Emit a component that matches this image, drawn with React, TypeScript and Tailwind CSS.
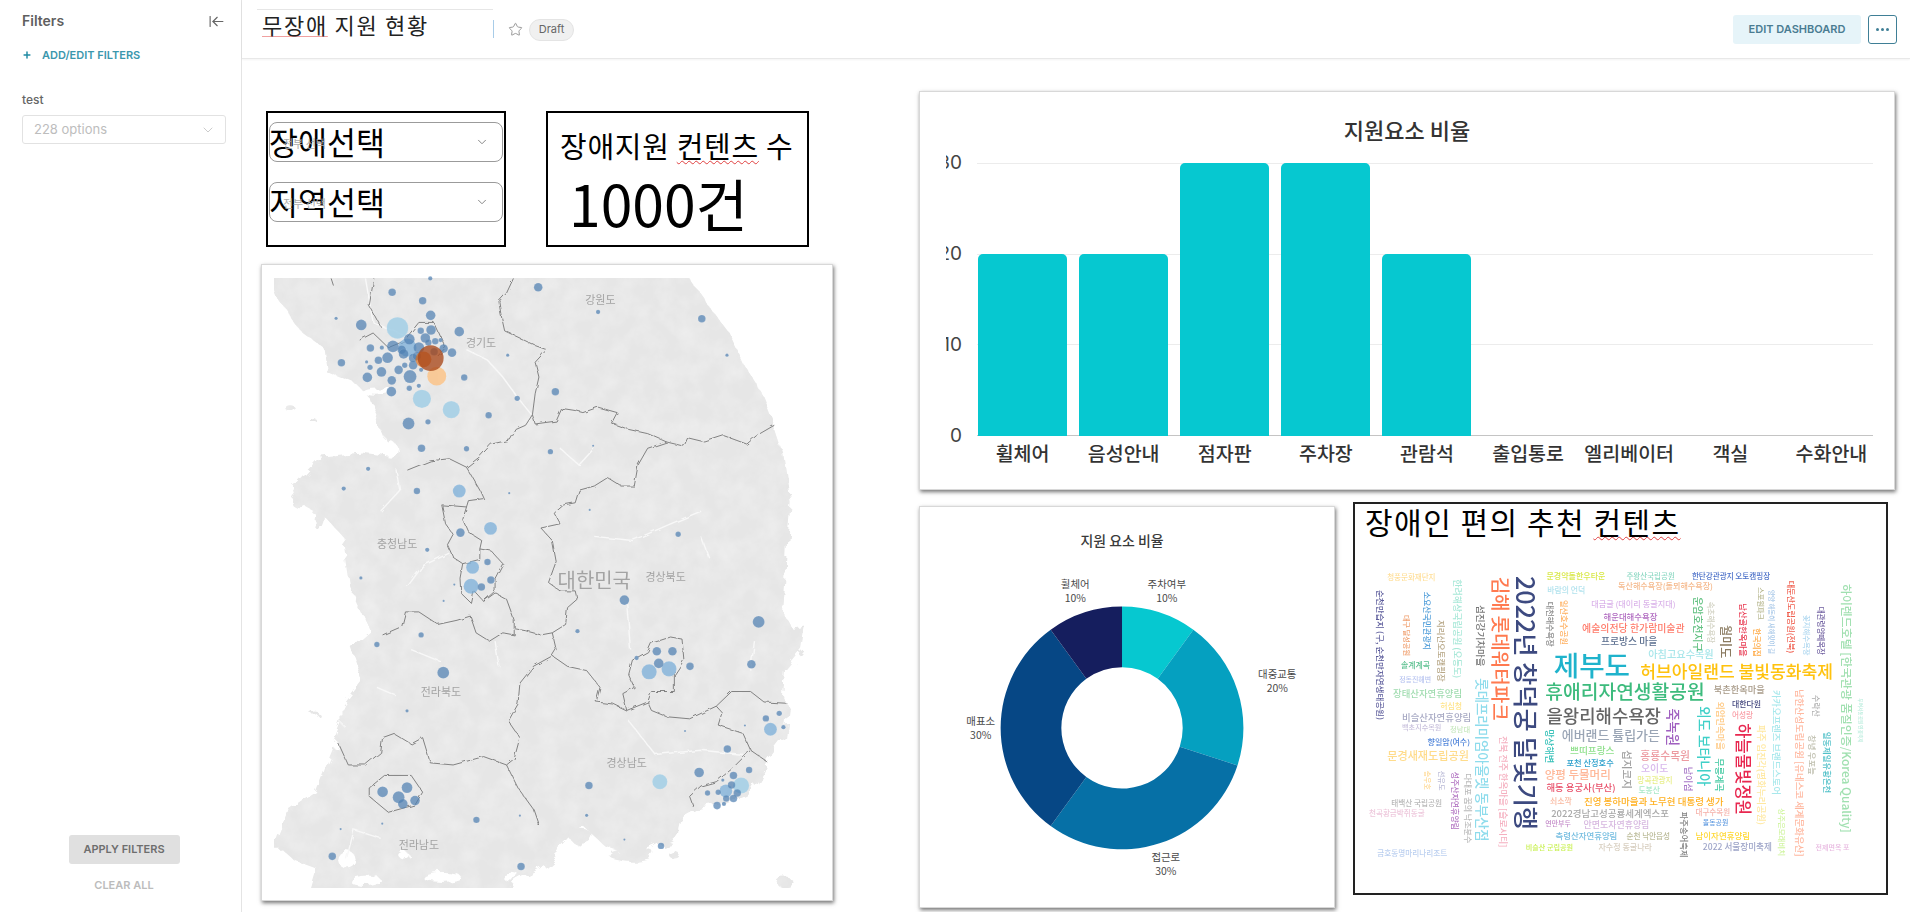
import { ArrowLeftToLine, ChevronDown, Plus, Star } from "lucide-react";

const KR = "font-['Noto_Sans_CJK_KR','Noto_Sans',sans-serif]";

// ---- map data, in px of the source crop (see mapX / mapY)
const mapX = (x: number) => x / 2.613 + 250;
const mapY = (y: number) => y / 2.376 + 250;
const toPath = (pts: number[], close = false) => {
  let d = "";
  for (let i = 0; i < pts.length; i += 2) {
    d += `${i === 0 ? "M" : "L"}${mapX(pts[i]).toFixed(1)} ${mapY(pts[i + 1]).toFixed(1)} `;
  }
  return close ? d + "Z" : d;
};

const land = [
  40, 20, 1130, 20, 1150, 65, 1200, 130, 1250, 190, 1290, 270, 1340, 340, 1370, 410, 1395, 480, 1415, 600, 1405, 700, 1400, 800,
  1395, 860, 1420, 900, 1455, 895, 1445, 950, 1400, 1000, 1395, 1060, 1410, 1090, 1400, 1160, 1350, 1220, 1310, 1290,
  1240, 1320, 1170, 1330, 1130, 1350, 1120, 1390, 1060, 1420, 1000, 1440, 930, 1420, 870, 1370, 820, 1420, 760, 1470,
  700, 1500, 600, 1560, 140, 1560, 170, 1470, 110, 1450, 60, 1410, 90, 1340, 170, 1290, 200, 1220, 240, 1130, 240, 1080,
  290, 1020, 260, 940, 310, 900, 290, 860, 260, 800, 240, 680, 200, 640, 120, 600, 110, 560, 180, 490, 290, 480, 370, 490,
  340, 420, 310, 350, 280, 320, 200, 290, 190, 230, 130, 190, 60, 100,
];

const islands = [
  [1400, 1505, 22, 12], [1000, 1440, 60, 16], [1085, 1385, 38, 28], [865, 1395, 30, 18], [100, 372, 12, 7], [165, 405, 8, 5],
  [135, 600, 26, 18], [180, 640, 16, 26], [165, 1100, 10, 5], [75, 1420, 16, 10], [1110, 1440, 14, 8],
];
const inlets = [
  [300, 1500, 40, 14], [500, 1492, 50, 12], [250, 1450, 24, 20], [680, 1490, 24, 8], [400, 1440, 14, 8], [330, 335, 40, 10], [360, 470, 22, 20],
];

const rivers = [
  [565, 235, 620, 260, 660, 300, 700, 350, 735, 390],
  [985, 840, 995, 950],
  [340, 620, 390, 570, 380, 520],
  [900, 680, 1000, 690, 1100, 650, 1180, 620],
  [1180, 680, 1200, 730],
  [810, 470, 860, 510, 900, 470],
  [410, 800, 450, 750, 520, 720],
  [990, 1120, 1060, 1200, 1180, 1190, 1290, 1200],
  [340, 1400, 270, 1380, 250, 1450],
  [420, 950, 500, 980],
  [640, 930, 650, 990],
  [300, 65, 320, 170, 400, 200],
  [1320, 930, 1310, 1000],
  [330, 1040, 380, 1060],
];

const borders = [
  [688, 65, 670, 100, 650, 120, 655, 150, 665, 190, 700, 205, 745, 225, 775, 235, 745, 265, 755, 300, 745, 340, 738, 390, 720, 415, 695, 425, 680, 450, 630, 460, 600, 490, 565, 515, 520, 495, 470, 500, 410, 522],
  [738, 390, 745, 412, 800, 405, 815, 375, 850, 380, 870, 385, 910, 372, 960, 385, 945, 410, 990, 425, 1040, 435, 1090, 455, 1135, 465, 1145, 445, 1190, 455, 1240, 440, 1300, 460, 1325, 440, 1372, 415],
  [1090, 455, 1040, 470, 1015, 510, 1005, 560, 970, 560, 935, 540, 900, 560, 860, 570, 850, 600, 820, 605, 795, 625, 810, 650, 760, 660, 790, 690, 800, 740, 780, 790, 810, 810, 850, 810, 855, 830, 830, 850, 825, 890, 790, 910, 800, 950, 790, 965],
  [345, 915, 395, 895, 405, 860, 440, 860, 490, 890, 540, 880, 575, 870, 590, 910, 625, 930, 660, 910, 690, 915, 690, 880, 670, 830, 640, 815, 610, 835],
  [690, 900, 720, 905, 760, 915, 790, 910],
  [555, 745, 600, 735, 600, 710, 630, 715, 660, 745, 640, 780, 640, 810, 610, 835, 585, 810, 578, 840, 550, 815, 548, 780, 555, 745],
  [565, 515, 600, 570, 610, 590, 570, 595, 555, 640, 570, 670, 605, 690, 600, 710],
  [565, 610, 500, 605, 510, 650, 530, 675, 515, 700, 530, 730, 555, 745],
  [790, 965, 740, 990, 705, 1030, 700, 1080, 675, 1120, 705, 1160, 690, 1210, 670, 1225, 700, 1280, 740, 1330, 755, 1370],
  [790, 965, 830, 990, 880, 1000, 915, 1040, 905, 1075, 950, 1080, 985, 1095, 1040, 1075, 1050, 1095, 1090, 1110, 1150, 1115, 1220, 1085, 1260, 1050, 1310, 1050, 1345, 1075, 1405, 1078],
  [985, 1095, 975, 1055, 1005, 1040, 990, 1010, 1000, 975, 1040, 955, 1050, 935, 1100, 920, 1130, 925, 1135, 975, 1110, 1010, 1110, 1050, 1050, 1050, 1040, 1075],
  [1220, 1085, 1235, 1100, 1225, 1130, 1290, 1150, 1310, 1190, 1350, 1215],
  [1310, 1190, 1260, 1235, 1220, 1265, 1180, 1275, 1150, 1300, 1160, 1325],
  [230, 1175, 255, 1225, 300, 1225, 340, 1195, 345, 1160, 375, 1150, 420, 1175, 450, 1160, 470, 1220, 530, 1225, 610, 1205, 670, 1225],
  [310, 1280, 350, 1250, 420, 1250, 450, 1290, 430, 1320, 360, 1338, 310, 1300, 310, 1280],
  [285, 212, 320, 195, 360, 230, 400, 215, 440, 170, 480, 170, 510, 230, 490, 250],
  [322, 65, 310, 130, 340, 180],
  [210, 65, 216, 82],
];

const bigLight = [
  [384, 183, 10], [448, 352, 8.5], [525, 378, 8], [1072, 1265, 7], [1285, 1274, 7.5],
];
const midLight = [
  [410, 230, 8.5], [1096, 996, 7], [1044, 1003, 7], [1362, 1140, 6], [577, 799, 7], [546, 572, 6], [628, 661, 6], [581, 754, 6], [1245, 1287, 6],
];
const dots = [
  [370, 98, 3.5], [450, 118, 3.5], [470, 65, 2], [753, 86, 4], [223, 160, 1.5], [289, 176, 5], [471, 153, 4.5], [910, 145, 2], [1182, 161, 3.5], [546, 192, 4.5],
  [1248, 248, 1.5], [673, 248, 1.5], [527, 242, 4], [237, 266, 3.5], [313, 231, 3.5], [343, 230, 2], [303, 264, 1.5], [312, 277, 2.5], [334, 260, 3.5], [358, 254, 5],
  [372, 227, 5.5], [342, 288, 4.5], [305, 301, 4.5], [369, 308, 4], [368, 335, 4.5], [417, 299, 6], [415, 327, 2.5], [440, 321, 2], [387, 283, 4], [403, 272, 2.5],
  [425, 272, 4], [446, 283, 2], [559, 301, 3], [798, 335, 3.5], [698, 351, 2.5], [623, 391, 3], [413, 411, 5.5], [464, 407, 2.5], [447, 470, 3.5], [565, 471, 2.5],
  [785, 478, 2.5], [897, 464, 1], [307, 519, 2], [243, 566, 2], [435, 572, 3], [677, 577, 1], [888, 617, 1], [549, 671, 4], [1120, 675, 2.5], [462, 712, 2],
  [620, 741, 3], [288, 779, 1.5], [629, 784, 3.5], [533, 795, 1], [604, 801, 3.5], [505, 834, 1], [979, 832, 4.5], [1331, 884, 5.5], [856, 906, 2], [446, 915, 2.5],
  [330, 938, 2.5], [1011, 970, 2], [1064, 954, 4], [1105, 954, 4], [1069, 983, 4.5], [1151, 990, 3.5], [1312, 985, 4], [504, 1005, 5.5], [409, 1096, 1.5], [1350, 1114, 3],
  [1385, 1102, 2.5], [1396, 1135, 2], [1295, 1131, 1], [1138, 1144, 1], [1249, 1187, 3.5], [1175, 1243, 4.5], [1306, 1237, 3], [1265, 1250, 3.5], [886, 1274, 3.5], [1197, 1292, 2.5],
  [1225, 1290, 2.5], [1260, 1273, 3.5], [1275, 1292, 3.5], [1265, 1305, 3.5], [1246, 1305, 3], [1222, 1322, 3.5], [1240, 1318, 2], [1237, 1261, 1.5], [345, 1289, 5], [409, 1279, 5],
  [387, 1302, 5.5], [430, 1310, 4.5], [398, 1318, 4.5], [344, 1365, 1], [235, 1378, 1], [591, 1356, 3], [705, 1346, 1], [880, 1345, 1.5], [979, 1403, 1], [1075, 1418, 3],
  [213, 1443, 3.5], [708, 1467, 3.5], [445, 190, 3], [472, 188, 4.5], [457, 207, 4.5], [483, 215, 3], [497, 212, 2], [465, 218, 3], [505, 232, 4], [415, 210, 5],
  [440, 230, 5], [395, 235, 4], [425, 255, 4], [435, 250, 4], [400, 245, 4.5], [480, 240, 3.5],
];

const mapLabels: [string, number, number, number][] = [
  ["강원도", 916, 115, 11], ["경기도", 603, 217, 11], ["충청남도", 383, 697, 11], ["대한민국", 900, 783, 20],
  ["경상북도", 1087, 775, 11], ["전라북도", 498, 1048, 11], ["경상남도", 985, 1218, 11], ["전라남도", 440, 1413, 11],
];

function KoreaMap() {
  const circles = (list: number[][], fill: string, opacity: number) =>
    list.map(([x, y, r], i) => <circle key={i} cx={mapX(x)} cy={mapY(y)} r={r * 1.08} fill={fill} fillOpacity={opacity} stroke="#ffffff" strokeOpacity={0.2} strokeWidth={0.5} />);

  return (
    <svg viewBox="261 264 572 637" className="block h-full w-full blur-[0.6px]">
      <defs>
        <clipPath id="map-frame">
          <rect x={273} y={277} width={532} height={612} />
        </clipPath>
        <filter id="coast" x="-5%" y="-5%" width="110%" height="110%">
          <feTurbulence type="fractalNoise" baseFrequency="0.07" numOctaves="3" seed="4" result="n" />
          <feDisplacementMap in="SourceGraphic" in2="n" scale="14" result="landShape" />
          <feTurbulence type="fractalNoise" baseFrequency="0.05" numOctaves="4" seed="9" />
          <feColorMatrix values="0 0 0 0 1  0 0 0 0 1  0 0 0 0 1  0.5 0 0 0 -0.17" result="spots" />
          <feComposite in="spots" in2="landShape" operator="in" result="lit" />
          <feMerge>
            <feMergeNode in="landShape" />
            <feMergeNode in="lit" />
          </feMerge>
        </filter>
        <filter id="wiggle" x="-5%" y="-5%" width="110%" height="110%">
          <feTurbulence type="fractalNoise" baseFrequency="0.12" numOctaves="2" seed="2" result="n" />
          <feDisplacementMap in="SourceGraphic" in2="n" scale="4" />
        </filter>
      </defs>
      <g clipPath="url(#map-frame)">
        <g filter="url(#coast)">
          <path d={toPath(land, true)} fill="#e6e6e6" />
          {inlets.map(([x, y, a, b], i) => (
            <ellipse key={i} cx={mapX(x)} cy={mapY(y)} rx={a / 2.6} ry={b / 2.4} fill="#ffffff" />
          ))}
          {islands.map(([x, y, a, b], i) => (
            <ellipse key={i} cx={mapX(x)} cy={mapY(y)} rx={a / 2.6} ry={b / 2.4} fill="#e6e6e6" />
          ))}
        </g>
        <g filter="url(#wiggle)">
          {rivers.map((r, i) => (
            <path key={i} d={toPath(r)} fill="none" stroke="#f8f8f8" strokeWidth={1.4} />
          ))}
          {borders.map((b, i) => (
            <path key={i} d={toPath(b)} fill="none" stroke="#757575" strokeWidth={0.9} />
          ))}
        </g>
      </g>
      {mapLabels.map(([t, x, y, s]) => (
        <text key={t} x={mapX(x)} y={mapY(y)} fontSize={s} fill="#a3a3a3" textAnchor="middle" dominantBaseline="central" fontFamily="'Noto Sans CJK KR',sans-serif">
          {t}
        </text>
      ))}
      {circles(bigLight, "#a5cfe6", 0.9)}
      {circles(midLight, "#7aaed8", 0.75)}
      {circles(dots, "#4f7fb2", 0.72)}
      <circle cx={mapX(487)} cy={mapY(298)} r={9.5} fill="#fdc283" fillOpacity={0.8} />
      <circle cx={mapX(452)} cy={mapY(258)} r={8} fill="#d96f22" fillOpacity={0.7} />
      <circle cx={mapX(471)} cy={mapY(255)} r={13} fill="#a9481a" fillOpacity={0.78} />
    </svg>
  );
}

// ---- bar chart
const bars = [
  { label: "휠체어", value: 20 },
  { label: "음성안내", value: 20 },
  { label: "점자판", value: 30 },
  { label: "주차장", value: 30 },
  { label: "관람석", value: 20 },
  { label: "출입통로", value: 0 },
  { label: "엘리베이터", value: 0 },
  { label: "객실", value: 0 },
  { label: "수화안내", value: 0 },
];

function BarChart() {
  return (
    <div className="h-[399px] w-[976px] border border-[#d8d8d8] bg-white shadow-[1px_2px_4px_rgba(0,0,0,0.55)]">
      <h3 className={`${KR} mt-[23px] text-center text-[22px] font-medium leading-[28px] text-[#333]`}>지원요소 비율</h3>
      <div className="mt-[20px] ml-[26px] flex">
        <div className="flex h-[273px] w-[16px] flex-col justify-between overflow-x-clip font-['Inter',sans-serif] text-[19px] text-[#444]">
          {["30", "20", "10", "0"].map((t) => (
            <div key={t} className="flex h-0 items-center justify-end">
              {t}
            </div>
          ))}
        </div>
        <div className="ml-[10px] w-[910px]">
          <div className="relative h-[273px]">
            <div className="absolute inset-y-0 right-[9px] left-[5px] flex flex-col justify-between">
              <div className="h-px bg-[#ececec]" />
              <div className="h-px bg-[#ececec]" />
              <div className="h-px bg-[#ececec]" />
              <div className="h-px bg-[#c4c4c4]" />
            </div>
            <div className="relative grid h-full grid-cols-9 items-end">
              {bars.map((b) => (
                <div key={b.label} className="flex justify-center">
                  {b.value > 0 && <div className={`w-[89px] rounded-t-[5px] bg-[#06c8d0] ${b.value === 30 ? "h-[273px]" : "h-[182px]"}`} />}
                </div>
              ))}
            </div>
          </div>
          <div className={`${KR} mt-[4px] grid grid-cols-9 text-center text-[19.5px] font-medium leading-[26px] text-[#333]`}>
            {bars.map((b) => (
              <div key={b.label} className="whitespace-nowrap">
                {b.label}
              </div>
            ))}
          </div>
        </div>
      </div>
    </div>
  );
}

// ---- donut
const slices = [
  { pct: 10, color: "#06c8d0" },
  { pct: 20, color: "#05a0c0" },
  { pct: 30, color: "#0670a6" },
  { pct: 30, color: "#064785" },
  { pct: 10, color: "#151e5e" },
];
const donutLabels: [string, string, number, number][] = [
  ["휠체어", "10%", 1074, 583],
  ["주차여부", "10%", 1166, 583],
  ["대중교통", "20%", 1277, 673],
  ["매표소", "30%", 979, 721],
  ["접근로", "30%", 1165, 857],
];

function Donut() {
  const cx = 1121;
  const cy = 728;
  const R = 122;
  const r = 61;
  const pt = (rad: number, a: number) => `${(cx + rad * Math.sin(a)).toFixed(2)} ${(cy - rad * Math.cos(a)).toFixed(2)}`;
  let acc = 0;
  return (
    <div className="mt-[4px] h-[402px] w-[416px] shrink-0 border border-[#d8d8d8] bg-white shadow-[1px_2px_4px_rgba(0,0,0,0.55)]">
      <svg viewBox="918 506 416 402" className="block h-full w-full">
        <text x={1121} y={539} fontSize={14} fontWeight={500} fill="#3a3a3a" textAnchor="middle" dominantBaseline="central" fontFamily="'Noto Sans CJK KR',sans-serif">
          지원 요소 비율
        </text>
        {slices.map((s) => {
          const a0 = (acc / 100) * Math.PI * 2;
          acc += s.pct;
          const a1 = (acc / 100) * Math.PI * 2;
          const big = s.pct > 50 ? 1 : 0;
          return <path key={s.color} fill={s.color} d={`M${pt(R, a0)} A${R} ${R} 0 ${big} 1 ${pt(R, a1)} L${pt(r, a1)} A${r} ${r} 0 ${big} 0 ${pt(r, a0)} Z`} />;
        })}
        {donutLabels.map(([t, p, x, y]) => (
          <g key={t} fontSize={10.5} fill="#4a4a4a" textAnchor="middle" fontFamily="'Noto Sans CJK KR',sans-serif">
            <text x={x} y={y} dominantBaseline="central">
              {t}
            </text>
            <text x={x} y={y + 14} dominantBaseline="central">
              {p}
            </text>
          </g>
        ))}
      </svg>
    </div>
  );
}

// ---- word cloud: [text, start, end, cross, color, vertical?]
type Word = [string, number, number, number, string, number?];
const words: Word[] = [
  ["청풍문화재단지", 127, 260, 258, "#ffdf9a"], ["문경약돌한우타운", 565, 727, 257, "#d9e84a"], ["주왕산국립공원", 785, 918, 257, "#8fd9c4"],
  ["한탄강관광지 오토캠핑장", 965, 1180, 257, "#4a6fc8"], ["독산해수욕장(돌뫼해수욕장)", 762, 1023, 287, "#f5b98c"], ["바람의 언덕", 567, 672, 297, "#b3e3ee"],
  ["대금굴 (대이리 동굴지대)", 688, 920, 339, "#dbb5ea"], ["해운대해수욕장", 722, 870, 377, "#b06ac0"], ["예술의전당 한가람미술관", 663, 945, 415, "#ff7b6b"],
  ["프로방스 마을", 715, 870, 453, "#5c6f8f"], ["제부도", 585, 795, 522, "#1fb3cc"], ["아침고요수목원", 845, 1025, 490, "#a8e6ea"],
  ["허브아일랜드 불빛동화축제", 823, 1353, 541, "#ffc20e"], ["휴애리자연생활공원", 562, 1000, 604, "#3dbb7d"], ["북촌한옥마을", 1025, 1165, 597, "#a89a88"],
  ["을왕리해수욕장", 565, 880, 675, "#666666"], ["대한다원", 1075, 1155, 641, "#474b80"], ["어성랑", 1075, 1133, 674, "#f9a0a8"],
  ["에버랜드 튤립가든", 607, 877, 733, "#9aa5b5"], ["쁘띠프랑스", 630, 752, 780, "#8fe08c"], ["포천 산정호수", 620, 750, 815, "#2ca0cc"],
  ["홍룡수목원", 823, 960, 795, "#ec9aa0"], ["오이도", 825, 900, 833, "#d8b8ec"], ["양평 두물머리", 560, 742, 852, "#ffb899"],
  ["망곡관광지", 815, 912, 868, "#e8ef8a"], ["도봉산", 818, 877, 897, "#a9e8c8"], ["해동 용궁사(부산)", 565, 755, 893, "#e8506a"],
  ["쇠소깍", 575, 635, 930, "#f9b9a0"], ["진영 봉하마을과 노무현 대통령 생가", 668, 1052, 932, "#ffb020"], ["2022경남고성공룡세계엑스포", 578, 902, 968, "#a8a8a8"],
  ["연만부두", 562, 632, 1000, "#c38ac8"], ["안면도자연휴양림", 667, 848, 1002, "#d7b8e0"], ["측령산자연휴양림", 590, 760, 1035, "#74bde0"],
  ["순천 낙안읍성", 785, 905, 1036, "#bcbc9a"], ["남이자연휴양림", 975, 1125, 1035, "#ffd835"], ["비슬산 군립공원", 508, 638, 1070, "#c8f050"],
  ["자수정 동굴나라", 708, 855, 1069, "#d8cfc0"], ["2022 서울장미축제", 995, 1185, 1067, "#9ea5c8"], ["전제면옥 포", 1305, 1398, 1070, "#e8b8e0"],
  ["대구수목원", 975, 1070, 965, "#f5b0a8"], ["올동공원", 995, 1065, 995, "#5f9ae0"], ["금호동명마리나리조트", 100, 292, 1086, "#bcd0f0"],
  ["천곡황금박쥐동굴", 77, 230, 966, "#eec8dc"], ["태백산 국립공원", 138, 278, 936, "#b8b8b8"], ["문경새재도립공원", 127, 352, 795, "#ffdc8c"],
  ["향일암(여수)", 238, 355, 754, "#4a80d8"], ["백초지수목원", 168, 276, 712, "#c8c0dc"], ["청남대", 300, 355, 718, "#c8e8c0"],
  ["비슬산자연휴양림", 168, 358, 680, "#a8aac4"], ["허심청", 273, 333, 645, "#ffe48c"], ["장태산자연휴양림", 143, 333, 610, "#a0dcb0"],
  ["정동진해변", 160, 248, 566, "#b8c4f0"], ["솔계계곡", 165, 245, 524, "#5cc090"],
  ["순천만습지 (구, 순천만자연생태공원)", 300, 690, 108, "#5a5a9a", 1], ["소요산국민관광지", 305, 480, 238, "#4a9ad8", 1], ["대구 달성공원", 375, 498, 182, "#f0a070", 1],
  ["지리산오토캠핑장", 390, 575, 278, "#b8a888", 1], ["한려해상국립공원 (오동도)", 268, 565, 322, "#a8e8d8", 1], ["섬진강기차마을", 345, 530, 385, "#777777", 1],
  ["김해 롯데워터파크", 260, 692, 442, "#ff7a50", 1], ["2022년 창덕궁 달빛기행", 258, 1020, 512, "#3d4a80", 1], ["대천해수욕장", 335, 470, 575, "#8a8a8a", 1],
  ["일산호수공원", 330, 465, 615, "#ffb060", 1], ["롯데프리미엄아울렛 동부산점", 565, 1055, 390, "#8edcec", 1], ["전북 전주 한옥마을 [슬로시티]", 738, 1072, 448, "#f5b0c0", 1],
  ["성주산자연휴양림", 845, 1020, 315, "#b070c0", 1], ["다대포 꿈의 낙조분수", 850, 1060, 350, "#b8b8b8", 1], ["선유도", 842, 902, 277, "#bcbcd8", 1],
  ["송우호", 842, 900, 240, "#ffd890", 1], ["망상해변", 718, 820, 575, "#35c0b8", 1], ["섭지코지", 780, 897, 788, "#a0a0a0", 1],
  ["죽녹원", 655, 768, 915, "#a060c0", 1], ["남이섬", 830, 905, 955, "#a878c8", 1], ["외도 보타니아", 648, 888, 1000, "#40d0c8", 1],
  ["무릉계곡", 805, 905, 1042, "#40c8a0", 1], ["외암민속마을", 635, 780, 1043, "#ffc880", 1], ["하늘물빛정원", 700, 975, 1108, "#e82850", 1],
  ["파주 임진각(평화누리공원)", 705, 1005, 1155, "#ffe8a0", 1], ["파주송어축제", 965, 1103, 947, "#808080", 1], ["카카오프렌즈 브랜드스토어", 600, 915, 1200, "#a8e8ec", 1],
  ["남한산성도립공원 [유네스코 세계문화유산]", 598, 1100, 1262, "#ffb8a0", 1], ["수락산", 615, 680, 1308, "#b0b0b0", 1], ["창녕 우포늪", 735, 855, 1298, "#c0c0b0", 1],
  ["일동제일유황온천", 725, 910, 1340, "#50c0c8", 1], ["하이렌드호텔 [한국관광 품질인증/Korea Quality]", 282, 1028, 1392, "#a0e0b0", 1], ["부여서동공원 연꽃축제", 625, 758, 1430, "#b8ecdc", 1],
  ["상주은모래비치", 955, 1098, 1215, "#d0f5a0", 1], ["스포원파크", 292, 390, 1155, "#b8b890", 1], ["속초해수욕장", 335, 460, 1018, "#d0d0c0", 1],
  ["운암호천지구", 320, 485, 983, "#60c080", 1], ["월미도", 405, 505, 1060, "#8a7a60", 1], ["남산골한옥마을", 340, 500, 1108, "#e83850", 1],
  ["한국의집", 415, 500, 1145, "#ffa840", 1], ["양양 해돋이 새해맞이 길", 300, 492, 1185, "#a8c8e8", 1], ["대둔산도립공원(전북)", 272, 490, 1240, "#f06050", 1],
  ["꽃지해수욕장", 375, 497, 1283, "#b0d8f0", 1], ["대관령양떼목장", 350, 495, 1320, "#7060a0", 1],
];

const units = (t: string) => {
  let u = 0;
  for (const ch of t) {
    if (ch === " ") u += 0.25;
    else if (ch.charCodeAt(0) < 128) u += 0.56;
    else u += 0.92;
  }
  return u;
};

function WordCloud() {
  return (
    <svg viewBox="1354 540 531 353" className="block h-[353px] w-[531px] blur-[0.6px]">
      {words.map(([t, a, b, c, color, v]) => {
        const x0 = v ? 1340 + c / 2.75 : 1340 + a / 2.75;
        const y0 = v ? 490 + a / 3 : 490 + c / 3;
        const len = v ? (b - a) / 3 : (b - a) / 2.75;
        const size = len / units(t);
        return (
          <text
            key={t}
            x={x0}
            y={y0}
            fontSize={size}
            fontWeight={500}
            fill={color}
            dominantBaseline="central"
            textLength={len}
            lengthAdjust="spacingAndGlyphs"
            transform={v ? `rotate(90 ${x0} ${y0})` : undefined}
            fontFamily="'Noto Sans CJK KR',sans-serif"
          >
            {t}
          </text>
        );
      })}
    </svg>
  );
}

function SelectBox({ label }: { label: string }) {
  return (
    <div className="relative flex h-[40px] items-center justify-between rounded-[8px] border-[1.5px] border-[#9b9b9b] pr-[13px]">
      <span className={`${KR} -ml-[1px] text-[31.5px] leading-none text-black`}>{label}</span>
      <span className={`${KR} absolute top-[12px] left-[13px] text-[11px] text-[#aaa]`}>전부 선택</span>
      <ChevronDown className="h-[14px] w-[14px] text-[#777]" strokeWidth={1.5} />
    </div>
  );
}

export default function App() {
  return (
    <div className="flex h-[912px] w-[1910px] overflow-hidden bg-white font-['Inter',sans-serif]">
      <aside className="flex h-full w-[242px] shrink-0 flex-col border-r border-[#e4e4e4] pt-[12px] pr-[15px] pb-[20px] pl-[22px]">
        <div className="flex items-center justify-between pr-[1px]">
          <span className="text-[14px] leading-[18px] font-semibold text-[#5f5f5f]">Filters</span>
          <ArrowLeftToLine className="h-[17px] w-[17px] text-[#666]" strokeWidth={1.6} />
        </div>
        <div className="mt-[18px] flex items-center gap-[10px] text-[#3b97ad]">
          <Plus className="h-[10px] w-[10px] text-[#1f8aa3]" strokeWidth={3.5} />
          <span className="text-[11px] leading-[14px] font-semibold">ADD/EDIT FILTERS</span>
        </div>
        <div className="mt-[30px] text-[12px] leading-[16px] font-medium text-[#666]">test</div>
        <div className="mt-[7px] flex h-[29px] w-[204px] items-center justify-between rounded-[3px] border border-[#e2e2e2] pr-[9px] pl-[11px] text-[13px] text-[#bdbdbd]">
          228 options
          <ChevronDown className="h-[16px] w-[16px] text-[#c4c4c4]" strokeWidth={1.3} />
        </div>
        <div className="mt-auto flex flex-col items-center">
          <button className="h-[29px] w-[111px] rounded-[3px] bg-[#e0e0e0] text-[11px] font-semibold text-[#6e6e6e]">APPLY FILTERS</button>
          <button className="mt-[14px] text-[11px] leading-[14px] font-semibold text-[#bcbcbc]">CLEAR ALL</button>
        </div>
      </aside>

      <main className="flex min-w-0 flex-1 flex-col">
        <header className="relative flex h-[59px] shrink-0 items-center border-b border-[#e8e8e8] pr-[13px] pl-[15px] shadow-[0_1px_2px_rgba(0,0,0,0.05)]">
          <div className="-mt-[10px] flex h-[30px] w-[236px] items-start border-t border-[#e6e6e6] pl-[5px]">
            <span className={`${KR} text-[22px] leading-[28px] tracking-[1.7px] text-[#222]`}>
              <span className="underline decoration-[#f0a0a0] decoration-1 underline-offset-2">무장애</span> 지원 현황
            </span>
          </div>
          <div className="h-[18px] w-px bg-[#a8cce8]" />
          <Star className="mt-[1px] ml-[14px] h-[15px] w-[15px] text-[#9a9a9a]" strokeWidth={1.6} />
          <span className="mt-[1px] ml-[6px] flex h-[22px] w-[45px] items-center justify-center rounded-full border border-[#e4e4e4] bg-[#f0f0f0] text-[11px] text-[#666]">Draft</span>
          <button className="ml-auto h-[29px] w-[128px] rounded-[3px] bg-[#e6f4f9] text-[11px] font-semibold text-[#4a7c92]">EDIT DASHBOARD</button>
          <button className="ml-[7px] flex h-[29px] w-[29px] items-center justify-center gap-[2px] rounded-[3px] border-[1.5px] border-[#3f7f96]">
            <i className="h-[3px] w-[3px] rounded-full bg-[#3f7f96]" />
            <i className="h-[3px] w-[3px] rounded-full bg-[#3f7f96]" />
            <i className="h-[3px] w-[3px] rounded-full bg-[#3f7f96]" />
          </button>
        </header>

        <div className="flex flex-1 pl-[19px]">
          <section className="w-[572px] shrink-0 pt-[52px]">
            <div className="ml-[5px] flex items-start gap-[40px]">
              <div className="h-[136px] w-[240px] border-2 border-black px-[1px] pt-[9px]">
                <SelectBox label="장애선택" />
                <div className="mt-[20px]">
                  <SelectBox label="지역선택" />
                </div>
              </div>
              <div className={`${KR} h-[136px] w-[263px] border-2 border-black pt-[13px] pl-[12px] text-black`}>
                <div className="whitespace-nowrap text-[29px] leading-[38px] tracking-[0.7px]">
                  장애지원 <span className="underline decoration-[#e04040] decoration-wavy decoration-1 underline-offset-2">컨텐츠</span> 수
                </div>
                <div className="mt-[3px] pl-[9px] text-[57px] leading-[70px]">1000건</div>
              </div>
            </div>
            <div className="mt-[17px] h-[637px] w-[572px] border border-[#d8d8d8] bg-white shadow-[1px_2px_4px_rgba(0,0,0,0.55)]">
              <KoreaMap />
            </div>
          </section>

          <section className="ml-[86px] w-[976px] shrink-0 pt-[32px]">
            <BarChart />
            <div className="mt-[12px] flex items-start gap-[18px]">
              <Donut />
              <div className="h-[393px] w-[535px] shrink-0 border-2 border-[#222] bg-white">
                <div className={`${KR} h-[36px] whitespace-nowrap pl-[10px] text-[30px] leading-[34px] tracking-[1.5px] text-black`}>
                  장애인 편의 추천 <span className="underline decoration-[#e04040] decoration-wavy decoration-1 underline-offset-2">컨텐츠</span>
                </div>
                <WordCloud />
              </div>
            </div>
          </section>
        </div>
      </main>
    </div>
  );
}
